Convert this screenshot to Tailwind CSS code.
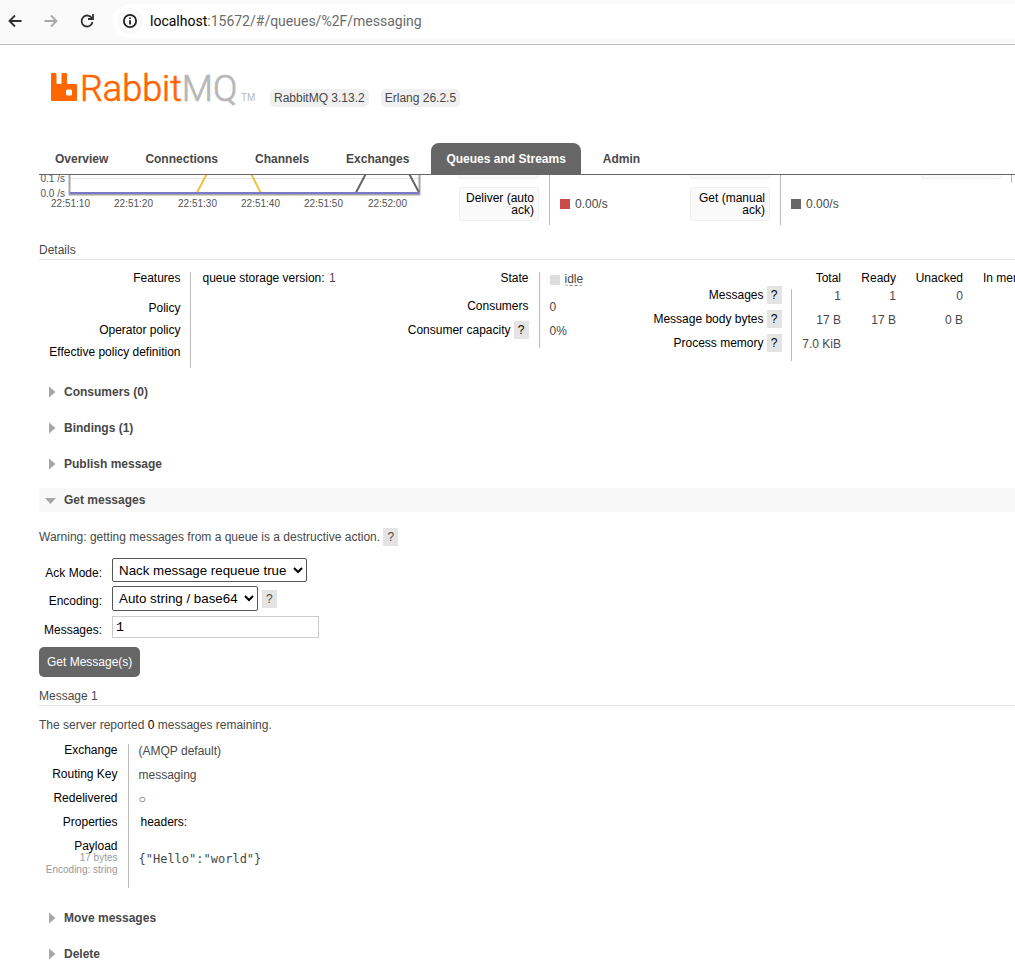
<!DOCTYPE html>
<html lang="en">
<head>
<meta charset="utf-8">
<title>RabbitMQ Management</title>
<script src="https://cdn.jsdelivr.net/npm/@tailwindcss/browser@4"></script>
</head>
<body class="overflow-x-hidden bg-white font-['Liberation_Sans',Arial,sans-serif] text-xs leading-3 text-[#484848]">

<!-- Browser toolbar -->
<div class="flex h-[45px] items-center border-b border-[#bdbdbd] bg-[#fafafa] pb-[2px]">
  <button type="button" aria-label="Back" class="ml-[3px] flex size-6 items-center justify-center text-[#303030]">
    <svg class="size-5" viewBox="0 0 20 20" fill="none" stroke="currentColor" stroke-width="1.800"><path d="M16.500 10H5M10 4.500 4.500 10l5.500 5.500"/></svg>
  </button>
  <button type="button" aria-label="Forward" class="ml-3 flex size-6 items-center justify-center text-[#a8a8a8]">
    <svg class="size-5" viewBox="0 0 20 20" fill="none" stroke="currentColor" stroke-width="1.800"><path d="M3.500 10H15M10 4.500l5.500 5.500-5.500 5.500"/></svg>
  </button>
  <button type="button" aria-label="Reload" class="ml-3 flex size-6 items-center justify-center text-[#303030]">
    <svg class="size-5" viewBox="0 0 20 20" fill="none" stroke="currentColor" stroke-width="1.800"><path d="M15 7.500A5.500 5.500 0 1 0 15.500 11"/><path d="M11 8h5V3"/></svg>
  </button>
  <div class="ml-[14px] flex h-[34px] flex-1 items-center rounded-l-full bg-white pl-1">
    <span class="flex size-[26px] items-center justify-center rounded-full bg-[#fafafa] text-[#1f1f1f]">
      <svg class="size-4" viewBox="0 0 16 16" fill="none" stroke="currentColor" stroke-width="1.800"><circle cx="8" cy="8" r="6.100"/><path d="M8 7.200v4.200M8 4.400v1.700"/></svg>
    </span>
    <span class="ml-[7px] font-[Roboto,sans-serif] text-sm leading-5 text-[#6b6b6b]"><span class="text-black">localhost</span>:15672/#/queues/%2F/messaging</span>
  </div>
</div>

<!-- Logo and versions -->
<header class="flex h-[98px] items-start pl-[50px] pt-[20px]">
  <svg class="h-[46px] w-[210px]" viewBox="0 -6 210 46" role="img" aria-label="RabbitMQ">
    <path fill="#ff6600" fill-rule="evenodd" d="M2 2h3.500q1 0 1 1v9q0 1 1 1h3q1 0 1-1V3q0-1 1-1h3.500q1 0 1 1v9q0 1 1 1H26q1 0 1 1v15q0 1-1 1H2q-1 0-1-1V3q0-1 1-1ZM17.500 18.500q-1.500 0-1.500 1.500v3q0 1.500 1.500 1.500h3q1.500 0 1.500-1.500v-3q0-1.500-1.500-1.500Z"/>
    <text x="30" y="30" font-family="Roboto, sans-serif" font-size="36" font-weight="300" fill="#ff6600" stroke="#ff6600" stroke-width="0.700">Rabbit<tspan fill="#b7b7b7" stroke="#b7b7b7">MQ</tspan></text>
    <text x="191" y="30" font-family="'Liberation Sans', sans-serif" font-size="10" fill="#b7b7b7">TM</text>
  </svg>
  <div class="ml-[10px] mt-[24px] flex gap-3 leading-[18px]">
    <span class="rounded-[5px] bg-[#f0f0f0] px-1">RabbitMQ 3.13.2</span>
    <span class="rounded-[5px] bg-[#f0f0f0] px-1">Erlang 26.2.5</span>
  </div>
</header>

<!-- Tabs -->
<nav class="ml-[39px] flex gap-[7px] border-b border-[#666] pl-px font-bold leading-[29px]">
  <a href="#" class="px-[15px] pt-[2px]">Overview</a>
  <a href="#" class="px-[15px] pt-[2px]">Connections</a>
  <a href="#" class="px-[15px] pt-[2px]">Channels</a>
  <a href="#" class="px-[15px] pt-[2px]">Exchanges</a>
  <a href="#" aria-current="page" class="whitespace-nowrap rounded-t-[8px] bg-[#666] px-[15px] pt-[2px] text-white">Queues and Streams</a>
  <a href="#" class="px-[15px] pt-[2px]">Admin</a>
</nav>

<main class="overflow-x-hidden pl-[39px]">
  <!-- Lower edge of the message rates panel, scrolled under the tabs -->
  <section class="flex h-[50px] w-max overflow-hidden">
    <svg class="h-[50px] w-[420px]" viewBox="39 175 420 50" font-family="'Liberation Sans', sans-serif" font-size="10" fill="#545454">
      <path d="M70 178.500h349" stroke="#e6e6e6"/>
      <path d="M69.500 175v19.500h350V175" fill="none" stroke="#a6a6a6" stroke-width="2"/>
      <path d="m197 192.500 10-19M251 173.500l9.500 19" fill="none" stroke="#edc240" stroke-width="2"/>
      <path d="m356 192.500 10-19M409 173.500l10 19" fill="none" stroke="#666" stroke-width="2"/>
      <path d="M70 193h349" stroke="#7a78c8" stroke-width="2"/>
      <text x="65" y="182" text-anchor="end">0.1 /s</text>
      <text x="65" y="197" text-anchor="end">0.0 /s</text>
      <g text-anchor="middle">
        <text x="70.500" y="207">22:51:10</text><text x="133.500" y="207">22:51:20</text><text x="197.500" y="207">22:51:30</text><text x="260.500" y="207">22:51:40</text><text x="323.500" y="207">22:51:50</text><text x="387.500" y="207">22:52:00</text>
      </g>
    </svg>
    <div class="flex w-[231px]">
      <div class="w-[91px] border-r border-[#bbb] text-right text-black">
        <div class="h-1 w-20 rounded-b-[3px] border border-t-0 border-[#f0f0f0] bg-[#fafafa]"></div>
        <div class="mt-2 h-[34px] w-20 rounded-[3px] border border-[#f0f0f0] bg-[#fafafa] p-1">Deliver (auto ack)</div>
      </div>
      <div class="flex items-center gap-[5px] pl-[10px] pt-[8px]"><span class="size-[10px] bg-[#cb4b4b]"></span>0.00/s</div>
    </div>
    <div class="flex w-[231px]">
      <div class="w-[91px] border-r border-[#bbb] text-right text-black">
        <div class="h-1 w-20 rounded-b-[3px] border border-t-0 border-[#f0f0f0] bg-[#fafafa]"></div>
        <div class="mt-2 h-[34px] w-20 rounded-[3px] border border-[#f0f0f0] bg-[#fafafa] p-1">Get (manual ack)</div>
      </div>
      <div class="flex items-center gap-[5px] pl-[10px] pt-[8px]"><span class="size-[10px] bg-[#666]"></span>0.00/s</div>
    </div>
    <div class="h-2 w-[91px] border-r border-[#bbb]">
      <div class="h-1 w-20 rounded-b-[3px] border border-t-0 border-[#f0f0f0] bg-[#fafafa]"></div>
    </div>
  </section>

  <h3 class="mt-[19px] border-b border-[#e4e4e4] pb-[3px]">Details</h3>
  <section class="mt-3 flex w-max items-start whitespace-nowrap">
    <table class="w-[358px] text-left">
      <tbody>
        <tr class="h-[30px] align-top"><th class="w-[151px] border-r border-[#bbb] pr-[9px] text-right font-normal text-black">Features</th><td class="pl-3"><span class="text-black">queue storage version:</span> <abbr class="ml-px inline-block border-b border-dotted border-[#ddd] leading-[13px]">1</abbr></td></tr>
        <tr class="h-[22px] align-top"><th class="border-r border-[#bbb] pr-[9px] text-right font-normal text-black">Policy</th><td></td></tr>
        <tr class="h-[22px] align-top"><th class="border-r border-[#bbb] pr-[9px] text-right font-normal text-black">Operator policy</th><td></td></tr>
        <tr class="h-[22px] align-top"><th class="border-r border-[#bbb] pr-[9px] text-right font-normal text-black">Effective policy definition</th><td></td></tr>
      </tbody>
    </table>
    <table class="w-[246px]">
      <tbody>
        <tr class="h-7 align-top"><th class="w-[142px] border-r border-[#bbb] pr-[10px] text-right font-normal text-black">State</th><td class="pl-[10px]"><div class="flex items-center gap-[5px] pt-px"><span class="mt-px size-[10px] bg-[#ddd]"></span><abbr class="rounded-[3px] border-b border-dashed border-[#888]">idle</abbr></div></td></tr>
        <tr class="h-6 align-top"><th class="border-r border-[#bbb] pr-[10px] text-right font-normal text-black">Consumers</th><td class="pl-[10px] pt-px">0</td></tr>
        <tr class="h-6 align-top"><th class="border-r border-[#bbb] pr-[10px] text-right font-normal text-black">Consumer capacity <button type="button" class="-my-1 bg-[#e4e4e4] px-1 leading-[18px]">?</button></th><td class="pl-[10px] pt-px">0%</td></tr>
      </tbody>
    </table>
    <table class="text-right">
      <thead>
        <tr class="h-[17px] align-top text-black"><td class="w-[148px]"></td><th class="w-[50px] font-normal">Total</th><th class="w-[55px] font-normal">Ready</th><th class="w-[67px] font-normal">Unacked</th><th class="w-[89px] pl-5 text-left font-normal">In memory</th></tr>
      </thead>
      <tbody>
        <tr class="h-6 align-top"><th class="border-r border-[#bbb] pr-[9px] font-normal text-black">Messages <button type="button" class="-my-1 bg-[#e4e4e4] px-1 leading-[18px]">?</button></th><td class="pt-px">1</td><td class="pt-px">1</td><td class="pt-px">0</td><td></td></tr>
        <tr class="h-6 align-top"><th class="border-r border-[#bbb] pr-[9px] font-normal text-black">Message body bytes <button type="button" class="-my-1 bg-[#e4e4e4] px-1 leading-[18px]">?</button></th><td class="pt-px">17 B</td><td class="pt-px">17 B</td><td class="pt-px">0 B</td><td></td></tr>
        <tr class="h-6 align-top"><th class="border-r border-[#bbb] pr-[9px] font-normal text-black">Process memory <button type="button" class="-my-1 bg-[#e4e4e4] px-1 leading-[18px]">?</button></th><td class="pt-px">7.0 KiB</td><td></td><td></td><td></td></tr>
      </tbody>
    </table>
  </section>

  <div class="mt-3 flex flex-col gap-3 font-bold leading-6">
    <h2><button type="button" class="flex w-full items-center pl-[10px]"><svg class="mr-2 h-3 w-[7px]" viewBox="0 0 7 12"><path d="M0 0.500v11l6.500-5.500z" fill="#a6a6a6"/></svg>Consumers (0)</button></h2>
    <h2><button type="button" class="flex w-full items-center pl-[10px]"><svg class="mr-2 h-3 w-[7px]" viewBox="0 0 7 12"><path d="M0 0.500v11l6.500-5.500z" fill="#a6a6a6"/></svg>Bindings (1)</button></h2>
    <h2><button type="button" class="flex w-full items-center pl-[10px]"><svg class="mr-2 h-3 w-[7px]" viewBox="0 0 7 12"><path d="M0 0.500v11l6.500-5.500z" fill="#a6a6a6"/></svg>Publish message</button></h2>
    <h2><button type="button" aria-expanded="true" class="flex w-full items-center bg-[#f8f8f8] pl-[6px]"><svg class="mr-[7px] mt-[2px] h-[6px] w-3" viewBox="0 0 12 6"><path d="M0 0h11L5.500 6z" fill="#a6a6a6"/></svg>Get messages</button></h2>
  </div>

  <p class="mt-4 leading-[18px]">Warning: getting messages from a queue is a destructive action. <button type="button" class="bg-[#e4e4e4] px-1">?</button></p>

  <form class="mt-3">
    <div class="grid grid-cols-[63px_1fr] gap-x-[10px] gap-y-1">
      <label for="ack" class="pt-[6px] text-right leading-[18px] text-black">Ack Mode:</label>
      <div class="flex"><select id="ack" class="h-6 w-[195px] rounded-[2px] border border-[#555] bg-white pl-[2px] [font-size:revert] text-black"><option>Nack message requeue true</option></select></div>
      <label for="enc" class="pt-[6px] text-right leading-[18px] text-black">Encoding:</label>
      <div class="flex items-center gap-1"><select id="enc" class="h-[25px] w-[146px] rounded-[2px] border border-[#555] bg-white pl-[2px] [font-size:revert] text-black"><option>Auto string / base64</option></select><button type="button" class="bg-[#e4e4e4] px-1 leading-[18px]">?</button></div>
      <label for="count" class="pt-[6px] text-right leading-[18px] text-black">Messages:</label>
      <div class="flex pt-px"><input id="count" type="text" value="1" class="h-[22px] w-[207px] border border-[#ccc] px-[3px] font-['Liberation_Mono',monospace] [font-size:revert] text-black"></div>
    </div>
    <button type="button" class="mt-2 rounded-[5px] bg-[#666] px-2 leading-[30px] text-white">Get Message(s)</button>
  </form>

  <h3 class="mt-[13px] border-b border-[#e4e4e4] pb-[3px]">Message 1</h3>
  <p class="mt-[13px]">The server reported <b class="font-normal text-black">0</b> messages remaining.</p>

  <table class="mt-[13px] whitespace-nowrap text-left">
    <tbody>
      <tr class="h-6 align-top"><th class="w-[89px] border-r border-[#bbb] pr-[10px] text-right font-normal text-black">Exchange</th><td class="pl-[10px] pt-px">(AMQP default)</td></tr>
      <tr class="h-6 align-top"><th class="border-r border-[#bbb] pr-[10px] text-right font-normal text-black">Routing Key</th><td class="pl-[10px] pt-px">messaging</td></tr>
      <tr class="h-6 align-top"><th class="border-r border-[#bbb] pr-[10px] text-right font-normal text-black">Redelivered</th><td class="pl-[10px] pt-px">○</td></tr>
      <tr class="h-6 align-top"><th class="border-r border-[#bbb] pr-[10px] text-right font-normal text-black">Properties</th><td class="pl-3 text-black">headers:</td></tr>
      <tr class="h-12 align-top"><th class="border-r border-[#bbb] pr-[10px] text-right font-normal text-black">Payload<span class="block text-[10px] text-[#999]">17 bytes<br>Encoding: string</span></th><td class="pl-[10px] pt-[13px]"><pre class="font-['DejaVu_Sans_Mono',monospace]">{"Hello":"world"}</pre></td></tr>
    </tbody>
  </table>

  <div class="mt-[18px] flex flex-col gap-3 pb-2 font-bold leading-6">
    <h2><button type="button" class="flex w-full items-center pl-[10px]"><svg class="mr-2 h-3 w-[7px]" viewBox="0 0 7 12"><path d="M0 0.500v11l6.500-5.500z" fill="#a6a6a6"/></svg>Move messages</button></h2>
    <h2><button type="button" class="flex w-full items-center pl-[10px]"><svg class="mr-2 h-3 w-[7px]" viewBox="0 0 7 12"><path d="M0 0.500v11l6.500-5.500z" fill="#a6a6a6"/></svg>Delete</button></h2>
  </div>
</main>
</body>
</html>
